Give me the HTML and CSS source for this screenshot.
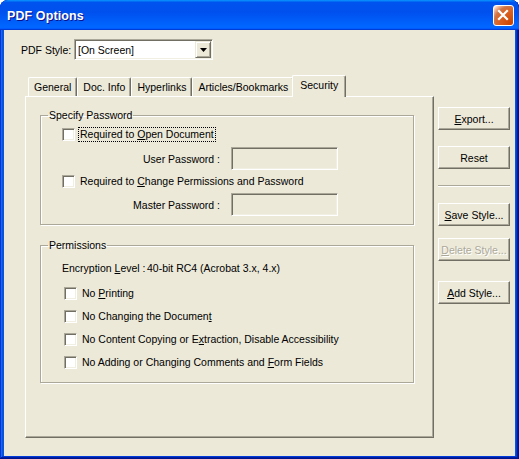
FILE: index.html
```html
<!DOCTYPE html>
<html>
<head>
<meta charset="utf-8">
<title>PDF Options</title>
<link rel="stylesheet" href="styles.css">
</head>
<body>
<div class="window">
  <div class="titlebar">
    <span class="title">PDF Options</span>
    <span class="close"><svg width="21" height="21" viewBox="0 0 21 21"><path d="M6 6L14 14M14 6L6 14" stroke="#fff" stroke-width="2.2" stroke-linecap="square"/></svg></span>
  </div>
  <div class="client">
    <div class="style-row">
      <span class="style-label">PDF Style:</span>
      <div class="select">
        <span class="select-text">[On Screen]</span>
        <span class="select-btn"><svg width="7" height="4" viewBox="0 0 7 4"><path d="M0 0H7L3.5 4Z" fill="#000"/></svg></span>
      </div>
    </div>
    <div class="main">
      <div class="tabarea">
        <div class="tabs">
          <span class="tab">General</span>
          <span class="tab">Doc. Info</span>
          <span class="tab">Hyperlinks</span>
          <span class="tab">Articles/Bookmarks</span>
          <span class="tab active">Security</span>
        </div>
        <div class="panel">
          <fieldset class="group group-pw">
            <legend>Specify Password</legend>
            <div class="cb-row row-a"><span class="cb"></span><span class="cb-label focus">Required to <u>O</u>pen Document</span></div>
            <div class="pw-row row-b"><span class="pw-label">User Password :</span><span class="field"></span></div>
            <div class="cb-row row-c"><span class="cb"></span><span class="cb-label">Required to <u>C</u>hange Permissions and Password</span></div>
            <div class="pw-row row-d"><span class="pw-label">Master Password :</span><span class="field"></span></div>
          </fieldset>
          <fieldset class="group group-perm">
            <legend>Permissions</legend>
            <div class="enc-row"><span class="enc-label">Encryption <u>L</u>evel :</span><span>40-bit RC4 (Acrobat 3.x, 4.x)</span></div>
            <div class="cb-row perm-row first"><span class="cb"></span><span class="cb-label">No <u>P</u>rinting</span></div>
            <div class="cb-row perm-row"><span class="cb"></span><span class="cb-label">No Changing the Documen<u>t</u></span></div>
            <div class="cb-row perm-row"><span class="cb"></span><span class="cb-label">No Content Copying or E<u>x</u>traction, Disable Accessibility</span></div>
            <div class="cb-row perm-row"><span class="cb"></span><span class="cb-label">No Adding or Changing Comments and <u>F</u>orm Fields</span></div>
          </fieldset>
        </div>
      </div>
      <div class="buttons">
        <button class="btn btn-export"><u>E</u>xport...</button>
        <button class="btn btn-reset">Reset</button>
        <div class="separator"></div>
        <button class="btn btn-save"><u>S</u>ave Style...</button>
        <button class="btn btn-delete disabled"><u>D</u>elete Style...</button>
        <button class="btn btn-add"><u>A</u>dd Style...</button>
      </div>
    </div>
  </div>
</div>
</body>
</html>
```

FILE: styles.css
```css
html, body {
  margin: 0;
  padding: 0;
  background: #ffffff;
}

body {
  font-family: "Liberation Sans", Arial, sans-serif;
  font-size: 10.5px;
  color: #000;
}

.window {
  width: 519px;
  height: 459px;
  box-sizing: border-box;
  background: #0855dd;
  border-radius: 8px 8px 0 0;
  overflow: hidden;
  display: flex;
  flex-direction: column;
  box-shadow: inset -1px -1px #00138c, inset 1px 1px #0831d9,
              inset -2px -2px #001ea0, inset 2px 2px #166aee,
              inset -3px -3px #003bda, inset 3px 3px #0855dd;
}

.titlebar {
  flex: none;
  height: 30px;
  box-sizing: border-box;
  display: flex;
  align-items: center;
  justify-content: space-between;
  padding: 0 5px 0 7px;
  border-radius: 8px 8px 0 0;
  background: linear-gradient(180deg, #0997ff, #0053ee 8%, #0050ee 40%, #0066ff 88%, #0066ff 93%, #005bff 95%, #003dd7 96%, #003dd7);
}

.title {
  color: #fff;
  font-weight: bold;
  font-size: 12.5px;
  padding-top: 2px;
  text-shadow: 1px 1px #0f1089;
  letter-spacing: 0.1px;
}

.close {
  width: 21px;
  height: 21px;
  box-sizing: border-box;
  border: 1px solid #fff;
  border-radius: 3px;
  background: radial-gradient(circle at 90% 90%, #cc4600 0%, #dc6527 55%, #cd7546 70%, #ffccb2 90%, #ffffff 100%);
  display: flex;
  align-items: center;
  justify-content: center;
  margin-top: 1px;
}

.close svg {
  display: block;
  margin: -1px;
}

.client {
  flex: 1;
  margin: 0 4px 3px 4px;
  background: #ece9d8;
  display: flex;
  flex-direction: column;
}

.style-row {
  display: flex;
  align-items: center;
  padding: 9px 0 0 17px;
}

.style-label {
  width: 53px;
}

.select {
  width: 139px;
  height: 21px;
  box-sizing: border-box;
  background: #fff;
  border: 1px solid;
  border-color: #aca899 #ffffff #ffffff #aca899;
  box-shadow: inset 1px 1px #716f64, inset -1px -1px #f1efe2;
  display: flex;
  align-items: center;
  padding: 1px;
}

.select-text {
  flex: 1;
  padding-left: 2px;
}

.select-btn {
  width: 16px;
  height: 17px;
  box-sizing: border-box;
  background: #ece9d8;
  border: 1px solid;
  border-color: #ece9d8 #716f64 #716f64 #ece9d8;
  box-shadow: inset 1px 1px #fff, inset -1px -1px #aca899;
  display: flex;
  align-items: center;
  justify-content: center;
}

.select-btn svg {
  display: block;
}

.main {
  display: flex;
  margin-top: 15px;
  padding-left: 21px;
}

.tabarea {
  width: 409px;
  display: flex;
  flex-direction: column;
}

.tabs {
  height: 21px;
  display: flex;
  align-items: flex-end;
  padding-left: 3px;
}

.tab {
  height: 19px;
  box-sizing: border-box;
  padding: 0 5px;
  line-height: 18px;
  white-space: nowrap;
  border-left: 1px solid #fff;
  border-top: 1px solid #fff;
  border-right: 1px solid #716f64;
  box-shadow: inset -1px 0 #aca899;
  border-radius: 2px 2px 0 0;
  background: #ece9d8;
}

.tab.active {
  height: 22px;
  margin: 0 -2px -1px -2px;
  padding: 0 7px;
  line-height: 19px;
  position: relative;
  z-index: 1;
}

.panel {
  height: 342px;
  box-sizing: border-box;
  border: 1px solid;
  border-color: #ffffff #716f64 #716f64 #ffffff;
  box-shadow: inset -1px -1px #aca899;
  padding: 12px 19px 0 14px;
  display: flex;
  flex-direction: column;
}

.group {
  margin: 0;
  border: 1px solid #aca899;
  box-shadow: inset 1px 1px #fff, 1px 1px #fff;
  padding: 0 0 8px 21px;
  display: flex;
  flex-direction: column;
  min-inline-size: 0;
}

.group legend {
  padding: 0 1px;
  margin-left: -14px;
  line-height: 13px;
}

.group-perm {
  margin-top: 14px;
}

.cb-row {
  display: flex;
  align-items: center;
  height: 16px;
}

.cb {
  width: 13px;
  height: 13px;
  box-sizing: border-box;
  flex: none;
  background: #fff;
  border: 1px solid;
  border-color: #aca899 #ffffff #ffffff #aca899;
  box-shadow: inset 1px 1px #716f64, inset -1px -1px #f1efe2;
}

.cb-label {
  margin-left: 3px;
  padding: 0 1px;
  border: 1px solid transparent;
  line-height: 13px;
  white-space: nowrap;
}

.cb-label.focus {
  border: 1px dotted #000;
}

.row-a {
  margin-top: 4px;
}

.row-c {
  margin-top: 3px;
}

.pw-row {
  display: flex;
  align-items: center;
  height: 23px;
}

.row-b {
  margin-top: 5px;
}

.row-d {
  margin-top: 4px;
}

.pw-label {
  width: 158px;
  text-align: right;
  margin-right: 11px;
}

.field {
  width: 107px;
  height: 23px;
  box-sizing: border-box;
  background: #ece9d8;
  border: 1px solid;
  border-color: #aca899 #ffffff #ffffff #aca899;
  box-shadow: inset 1px 1px #716f64, inset -1px -1px #f1efe2;
}

.enc-row {
  display: flex;
  align-items: center;
  height: 16px;
  margin-top: 8px;
}

.enc-label {
  width: 85px;
  white-space: nowrap;
}

.perm-row {
  height: 23px;
  margin-left: 2px;
}

.perm-row.first {
  margin-top: 6px;
}

.buttons {
  width: 72px;
  margin-left: 4px;
  padding-top: 32px;
  display: flex;
  flex-direction: column;
}

.btn {
  width: 72px;
  height: 23px;
  box-sizing: border-box;
  padding: 0;
  margin: 0;
  font-family: "Liberation Sans", Arial, sans-serif;
  font-size: 10.5px;
  color: #000;
  background: #ece9d8;
  border: 1px solid;
  border-color: #ffffff #716f64 #716f64 #ffffff;
  box-shadow: inset -1px -1px #aca899;
  border-radius: 0;
  white-space: nowrap;
}

.btn-reset {
  margin-top: 16px;
}

.separator {
  margin-top: 16px;
  height: 0;
  border-top: 1px solid #aca899;
  border-bottom: 1px solid #fff;
}

.btn-save {
  margin-top: 16px;
}

.btn-delete {
  margin-top: 12px;
}

.btn-add {
  margin-top: 20px;
}

.btn.disabled {
  color: #aca899;
  text-shadow: 1px 1px #fff;
}
```
